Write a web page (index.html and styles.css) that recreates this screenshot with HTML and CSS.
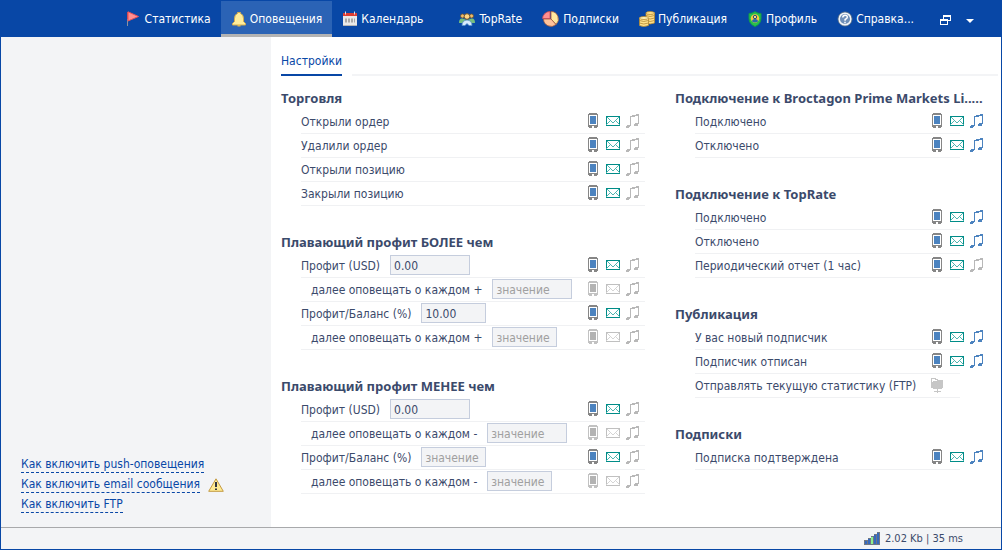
FILE: index.html
```
<!DOCTYPE html>
<html lang="ru">
<head>
<meta charset="utf-8">
<meta name="viewport" content="width=device-width, initial-scale=1">
<title>Оповещения</title>
<link rel="stylesheet" href="styles.css">
</head>
<body>
<svg class="sprite" aria-hidden="true">
  <symbol id="phone" viewBox="0 0 20 17">
    <path class="case" fill-rule="evenodd" d="M6 0h8v1h1v13h-1v1h-3v-2H9v2H6v-1H5V1h1zM6 2v10h8V2z"/>
    <path class="screen" d="M7 3h6v8H7z"/>
  </symbol>
  <symbol id="mail" viewBox="0 0 20 17">
    <path class="edge" d="M3.500 3.500h13v9h-13z"/>
    <path class="fold" d="M4 4h1v1h1v1h1v1h1v1h1v1h2V8h1V7h1V6h1V5h1V4h1v1h-1v1h-1v1h-1v1h1v1h1v1h1v1h1v1h-1v-1h-1v-1h-1V9h-1V8h-1v1h-1v1H9V9H8V8H7v1H6v1H5v1H4v1H3v-1h1v-1h1V9h1V8h1V7H6V6H5V5H4z"/>
  </symbol>
  <symbol id="note" viewBox="0 0 20 17">
    <path class="ink" d="M7 3h2V2h4V1h3v10h-1v2h-4v-2h1v-1h3V3h-3v1H8v9H7v1H6v1H3v-2h1v-1h3z"/>
  </symbol>
  <symbol id="server" viewBox="0 0 20 17">
    <path fill="none" stroke="#c6c6c6" d="M4.500 11V1.500h4v1h2v1h5"/>
    <path fill="#c6c6c6" d="M6 4h10v7h-1v1H6v-1H5V5h1zM10 12h1v2h3v1h-3v1h-1v-1H7v-1h3z"/>
  </symbol>
</svg>

<header class="topbar">
  <nav class="nav">
    <a class="nav-item" href="#"><svg class="nav-icon" viewBox="0 0 16 16"><path d="M1.500 1v14" stroke="#b34a55"/><path d="M1.500 8v7" stroke="#8d8f9c"/><path d="M2 .8 12.500 5.500 2 10z" fill="#ff8f91" stroke="#e84f57"/></svg>Статистика</a>
    <a class="nav-item active" href="#" aria-current="page"><svg class="nav-icon" viewBox="0 0 16 16"><path d="M6.500 1.500h3v1q3 1 3 5v3l2 2v1.500h-13V12.500l2-2v-3q0-4 3-5z" fill="#ffed9b" stroke="#d6ad4b"/><path d="M6.500 14h3v1.500h-3z" fill="#e4b94a"/></svg>Оповещения</a>
    <a class="nav-item" href="#"><svg class="nav-icon" viewBox="0 0 16 16"><path d="M1 5h14v10H1z" fill="#e9e9e9"/><path d="M1 2h14v3H1z" fill="#dc3c32"/><path d="M3.500.500v3M12.500.500v3" stroke="#d9e0ec"/><path d="M3 9.500h10" stroke="#a8a8a8" stroke-width="4" stroke-dasharray="2 1"/><path d="M1 14.500h14" stroke="#b5b5b5"/></svg>Календарь</a>
    <a class="nav-item gap-before" href="#"><svg class="nav-icon wide" viewBox="0 0 18 16"><g fill="#f0bd6c" stroke="#6d542e" stroke-width=".8"><circle cx="4.500" cy="5" r="2"/><circle cx="13.500" cy="5" r="2"/></g><path d="M1 12q0-5 3.500-4.500L9 9l4.500-1.500Q17 7 17 12z" fill="#75bd7e"/><path d="M4 14.500q0-5 5-5.500 5 .5 5 5.500H11l-2-2-2 2z" fill="#d9ecff" stroke="#5a93ca" stroke-width=".8"/><circle cx="9" cy="5.500" r="2.800" fill="#ffd782" stroke="#785b31"/></svg>TopRate</a>
    <a class="nav-item" href="#"><svg class="nav-icon wide" viewBox="0 0 18 16"><g stroke="#a35c3c" stroke-width=".8"><path d="M9 8V.500A7.500 7.500 0 0 1 14 13.500z" fill="#ffeaa0"/><path d="m9 8 5 5.500A7.500 7.500 0 0 1 1.500 8z" fill="#ffc39b"/><path d="M8 7.500H.500A7.500 7.500 0 0 1 8 .500z" fill="#ff8f91" stroke="#cc4b53"/></g></svg>Подписки</a>
    <a class="nav-item" href="#"><svg class="nav-icon" viewBox="0 0 16 16"><g fill="#ffe18a" stroke="#b48932" stroke-width=".8"><path d="M7 2v10q4 2 8.500 0V2z"/><ellipse cx="11.200" cy="2" rx="4.300" ry="1.500"/><path d="M7 4.500q4 2 8.500 0M7 7q4 2 8.500 0M7 9.500q4 2 8.500 0" fill="none"/><path d="M.500 7v7.500q4 2 9 0V7z"/><ellipse cx="5" cy="7" rx="4.500" ry="1.500" fill="#fff0b3"/><path d="M.500 9.500q4 2 9 0M.500 12q4 2 9 0" fill="none"/></g></svg>Публикация</a>
    <a class="nav-item" href="#"><svg class="nav-icon" viewBox="0 0 16 16"><path d="M8 .700q3 2 6 1.800v5Q14 13 8 15.500 2 13 2 7.500v-5Q5 2.700 8 .700z" fill="#27c24c" stroke="#139b4a"/><circle cx="8" cy="7.500" r="4.200" fill="#f7c843"/><circle cx="8" cy="6" r="1.700" fill="#fbdc78" stroke="#204f80"/><path d="M5 10.500q0-2.500 3-2.500t3 2.500q-3 2-6 0z" fill="#2669b0"/></svg>Профиль</a>
    <a class="nav-item" href="#"><svg class="nav-icon" viewBox="0 0 16 16"><circle cx="8" cy="8" r="7" fill="#7f98b6" stroke="#5b7188"/><circle cx="8" cy="8" r="5.800" fill="#6f8fb8" stroke="#f2f5f8" stroke-width="1.500"/><path d="M5.800 6.500q0-2.300 2.300-2.300t2.200 2q0 1.200-2.200 2.300v1.200M8 10.800v1.500" fill="none" stroke="#fff" stroke-width="1.500"/></svg>Справка...</a>
  </nav>
  <button class="bar-button" aria-label="Восстановить окно"><svg width="12" height="12" viewBox="0 0 12 12" shape-rendering="crispEdges"><path fill="#fff" fill-rule="evenodd" d="M3 1h8v6H8v4H0V5h3zM4 3v2h4v1h2V3zM1 7v3h6V7z"/></svg></button>
  <button class="bar-button" aria-label="Меню"><svg width="8" height="12" viewBox="0 0 8 12"><path fill="#fff" d="M0 5h8L4 9z"/></svg></button>
</header>

<div class="content">
  <aside class="sidebar">
    <ul class="help">
      <li><a href="#">Как включить push-оповещения</a></li>
      <li><a href="#">Как включить email сообщения</a><svg class="warning" viewBox="0 0 16 14" role="img" aria-label="Внимание"><path d="M8 .800 15.300 13.300H.700z" fill="#ffeb94" stroke="#c49a42" stroke-linejoin="round"/><path d="M8 4v5M8 10.500v1.500" stroke="#2f3440" stroke-width="2"/></svg></li>
      <li><a href="#">Как включить FTP</a></li>
    </ul>
  </aside>

  <main class="main">
    <div class="tabs"><a class="tab" href="#">Настройки</a></div>
    <div class="columns">
      <div class="column">
        <section>
          <h2>Торговля</h2>
          <ul class="rows">
            <li class="row"><span>Открыли ордер</span><div class="toggles"><button class="phone on" aria-label="Push"><svg><use href="#phone"/></svg></button><button class="mail on" aria-label="Email"><svg><use href="#mail"/></svg></button><button class="note" aria-label="Звук"><svg><use href="#note"/></svg></button></div></li>
            <li class="row"><span>Удалили ордер</span><div class="toggles"><button class="phone on" aria-label="Push"><svg><use href="#phone"/></svg></button><button class="mail on" aria-label="Email"><svg><use href="#mail"/></svg></button><button class="note" aria-label="Звук"><svg><use href="#note"/></svg></button></div></li>
            <li class="row"><span>Открыли позицию</span><div class="toggles"><button class="phone on" aria-label="Push"><svg><use href="#phone"/></svg></button><button class="mail on" aria-label="Email"><svg><use href="#mail"/></svg></button><button class="note" aria-label="Звук"><svg><use href="#note"/></svg></button></div></li>
            <li class="row"><span>Закрыли позицию</span><div class="toggles"><button class="phone on" aria-label="Push"><svg><use href="#phone"/></svg></button><button class="mail on" aria-label="Email"><svg><use href="#mail"/></svg></button><button class="note" aria-label="Звук"><svg><use href="#note"/></svg></button></div></li>
          </ul>
        </section>
        <section>
          <h2>Плавающий профит БОЛЕЕ чем</h2>
          <ul class="rows">
            <li class="row"><label for="more-usd">Профит (USD)</label><input id="more-usd" value="0.00" placeholder="значение"><div class="toggles"><button class="phone on" aria-label="Push"><svg><use href="#phone"/></svg></button><button class="mail on" aria-label="Email"><svg><use href="#mail"/></svg></button><button class="note" aria-label="Звук"><svg><use href="#note"/></svg></button></div></li>
            <li class="row sub"><label for="more-usd-step">далее оповещать о каждом +</label><input id="more-usd-step" placeholder="значение"><div class="toggles"><button class="phone" aria-label="Push"><svg><use href="#phone"/></svg></button><button class="mail" aria-label="Email"><svg><use href="#mail"/></svg></button><button class="note" aria-label="Звук"><svg><use href="#note"/></svg></button></div></li>
            <li class="row"><label for="more-pct">Профит/Баланс (%)</label><input class="short" id="more-pct" value="10.00" placeholder="значение"><div class="toggles"><button class="phone on" aria-label="Push"><svg><use href="#phone"/></svg></button><button class="mail on" aria-label="Email"><svg><use href="#mail"/></svg></button><button class="note" aria-label="Звук"><svg><use href="#note"/></svg></button></div></li>
            <li class="row sub"><label for="more-pct-step">далее оповещать о каждом +</label><input class="short" id="more-pct-step" placeholder="значение"><div class="toggles"><button class="phone" aria-label="Push"><svg><use href="#phone"/></svg></button><button class="mail" aria-label="Email"><svg><use href="#mail"/></svg></button><button class="note" aria-label="Звук"><svg><use href="#note"/></svg></button></div></li>
          </ul>
        </section>
        <section>
          <h2>Плавающий профит МЕНЕЕ чем</h2>
          <ul class="rows">
            <li class="row"><label for="less-usd">Профит (USD)</label><input id="less-usd" value="0.00" placeholder="значение"><div class="toggles"><button class="phone on" aria-label="Push"><svg><use href="#phone"/></svg></button><button class="mail on" aria-label="Email"><svg><use href="#mail"/></svg></button><button class="note" aria-label="Звук"><svg><use href="#note"/></svg></button></div></li>
            <li class="row sub"><label for="less-usd-step">далее оповещать о каждом -</label><input id="less-usd-step" placeholder="значение"><div class="toggles"><button class="phone" aria-label="Push"><svg><use href="#phone"/></svg></button><button class="mail" aria-label="Email"><svg><use href="#mail"/></svg></button><button class="note" aria-label="Звук"><svg><use href="#note"/></svg></button></div></li>
            <li class="row"><label for="less-pct">Профит/Баланс (%)</label><input class="short" id="less-pct" placeholder="значение"><div class="toggles"><button class="phone on" aria-label="Push"><svg><use href="#phone"/></svg></button><button class="mail on" aria-label="Email"><svg><use href="#mail"/></svg></button><button class="note" aria-label="Звук"><svg><use href="#note"/></svg></button></div></li>
            <li class="row sub"><label for="less-pct-step">далее оповещать о каждом -</label><input class="short" id="less-pct-step" placeholder="значение"><div class="toggles"><button class="phone" aria-label="Push"><svg><use href="#phone"/></svg></button><button class="mail" aria-label="Email"><svg><use href="#mail"/></svg></button><button class="note" aria-label="Звук"><svg><use href="#note"/></svg></button></div></li>
          </ul>
        </section>
      </div>

      <div class="column overhang">
        <section>
          <h2>Подключение к Broctagon Prime Markets Li.....</h2>
          <ul class="rows">
            <li class="row"><span>Подключено</span><div class="toggles"><button class="phone on" aria-label="Push"><svg><use href="#phone"/></svg></button><button class="mail on" aria-label="Email"><svg><use href="#mail"/></svg></button><button class="note on" aria-label="Звук"><svg><use href="#note"/></svg></button></div></li>
            <li class="row"><span>Отключено</span><div class="toggles"><button class="phone on" aria-label="Push"><svg><use href="#phone"/></svg></button><button class="mail on" aria-label="Email"><svg><use href="#mail"/></svg></button><button class="note on" aria-label="Звук"><svg><use href="#note"/></svg></button></div></li>
          </ul>
        </section>
        <section>
          <h2>Подключение к TopRate</h2>
          <ul class="rows">
            <li class="row"><span>Подключено</span><div class="toggles"><button class="phone on" aria-label="Push"><svg><use href="#phone"/></svg></button><button class="mail on" aria-label="Email"><svg><use href="#mail"/></svg></button><button class="note on" aria-label="Звук"><svg><use href="#note"/></svg></button></div></li>
            <li class="row"><span>Отключено</span><div class="toggles"><button class="phone on" aria-label="Push"><svg><use href="#phone"/></svg></button><button class="mail on" aria-label="Email"><svg><use href="#mail"/></svg></button><button class="note on" aria-label="Звук"><svg><use href="#note"/></svg></button></div></li>
            <li class="row"><span>Периодический отчет (1 час)</span><div class="toggles"><button class="phone on" aria-label="Push"><svg><use href="#phone"/></svg></button><button class="mail on" aria-label="Email"><svg><use href="#mail"/></svg></button><button class="note" aria-label="Звук"><svg><use href="#note"/></svg></button></div></li>
          </ul>
        </section>
        <section>
          <h2>Публикация</h2>
          <ul class="rows">
            <li class="row"><span>У вас новый подписчик</span><div class="toggles"><button class="phone on" aria-label="Push"><svg><use href="#phone"/></svg></button><button class="mail on" aria-label="Email"><svg><use href="#mail"/></svg></button><button class="note on" aria-label="Звук"><svg><use href="#note"/></svg></button></div></li>
            <li class="row"><span>Подписчик отписан</span><div class="toggles"><button class="phone on" aria-label="Push"><svg><use href="#phone"/></svg></button><button class="mail on" aria-label="Email"><svg><use href="#mail"/></svg></button><button class="note on" aria-label="Звук"><svg><use href="#note"/></svg></button></div></li>
            <li class="row"><span>Отправлять текущую статистику (FTP)</span><div class="toggles"><button aria-label="FTP"><svg><use href="#server"/></svg></button></div></li>
          </ul>
        </section>
        <section>
          <h2>Подписки</h2>
          <ul class="rows">
            <li class="row"><span>Подписка подтверждена</span><div class="toggles"><button class="phone on" aria-label="Push"><svg><use href="#phone"/></svg></button><button class="mail on" aria-label="Email"><svg><use href="#mail"/></svg></button><button class="note on" aria-label="Звук"><svg><use href="#note"/></svg></button></div></li>
          </ul>
        </section>
      </div>
    </div>
  </main>
</div>

<footer class="statusbar">
  <svg class="signal" width="16" height="13" viewBox="0 0 16 13" shape-rendering="crispEdges"><path fill="#707782" d="M0 8h4V6h3V4h3V2h3V0h3v13H0z"/><path fill="#3569bd" d="M1 9h2v3H1zM4 7h2v5H4zM10 3h2v9h-2zM13 1h2v11h-2z"/><path fill="#8df08a" d="M7 5h2v7H7z"/></svg>
  <span>2.02 Kb | 35 ms</span>
</footer>
</body>
</html>
```
FILE: styles.css
```
* { box-sizing: border-box; }

body {
  display: flex;
  flex-direction: column;
  min-height: 100vh;
  margin: 0;
  border: 1px solid #0847a6;
  border-top: 0;
  background: #fff;
  color: #3b4a6b;
  font: 12px/20px "DejaVu Sans Condensed", Tahoma, sans-serif;
}

ul { margin: 0; padding: 0; list-style: none; }
button { padding: 0; border: 0; background: none; cursor: pointer; }
a { color: #0847a6; text-decoration: none; }
.sprite { position: absolute; width: 0; height: 0; }

.topbar {
  display: flex;
  justify-content: flex-end;
  height: 37px;
  padding-right: 19px;
  background: #0847a6;
}
.nav { display: flex; }
.nav-item {
  display: flex;
  align-items: center;
  gap: 3px;
  padding: 2px 10px 0;
  border-top: 1px solid #0847a6;
  border-bottom: 3px solid transparent;
  color: #fff;
  white-space: nowrap;
}
.nav-item.active { background: #2b63b5; border-bottom-color: #b3b3b3; }
.nav-item.gap-before { margin-left: 15px; }
.nav-icon { width: 16px; height: 16px; }
.nav-icon.wide { width: 18px; }
.bar-button { display: flex; align-items: center; padding: 2px 8px 0 6px; }
.nav + .bar-button { margin-left: 10px; }

.content { display: flex; flex: 1; }
.sidebar {
  display: flex;
  flex: 0 0 270px;
  align-items: flex-end;
  padding: 0 20px 12px;
  background: #f3f4f6;
}
.help li { display: flex; align-items: center; gap: 8px; height: 20px; }
.help a { border-bottom: 1px dashed #0847a6; line-height: 15px; }
.warning { width: 16px; height: 14px; }

.main { flex: 1; min-width: 0; padding: 14px 3px 24px 10px; }
.tabs { display: flex; gap: 10px; }
.tabs::after { content: ""; flex: 1; border-bottom: 2px solid #f3f4f6; }
.tab { padding-bottom: 3px; border-bottom: 2px solid #0847a6; }

.columns {
  display: grid;
  grid-template-columns: 364fr 310fr;
  gap: 30px;
  padding: 10px 13px 0 0;
}
.column { display: flex; flex-direction: column; gap: 24px; min-width: 0; }
h2 {
  margin: 0;
  font: bold 13px/24px "Noto Sans", Tahoma, sans-serif;
  white-space: nowrap;
}
.rows { padding-left: 20px; }
.overhang .rows { margin-right: 25px; }
.row {
  display: flex;
  gap: 10px;
  height: 24px;
  border-bottom: 1px solid #f0f1f3;
  line-height: 24px;
  white-space: nowrap;
}
.row.sub { padding-left: 10px; }
.row input {
  width: 80px;
  height: 20px;
  margin: 1px 0;
  padding: 1px 3px 0;
  border: 1px solid #c5cddd;
  border-radius: 0;
  background: #f3f4f6;
  color: #3b4a6b;
  font: inherit;
}
.row input.short { width: 65px; }
.row input::placeholder { color: #a0a0a0; opacity: 1; }

.toggles { display: flex; width: 60px; margin: 3px 2px 0 auto; }
.overhang .toggles { margin-right: -27px; }
.toggles button { width: 20px; height: 17px; }
.toggles svg { display: block; width: 20px; height: 17px; shape-rendering: crispEdges; }
.phone { --case: #c2c2c2; --screen: #b3b3b3; }
.phone.on { --case: #868686; --screen: #4c83bf; }
.mail { --edge: #c0c0c0; --fold: #d5d5d5; }
.mail.on { --edge: #008c88; --fold: #4db5b0; }
.note { --ink: #b8b8b8; }
.note.on { --ink: #4c83bf; }
.case { fill: var(--case); }
.screen { fill: var(--screen); }
.edge { fill: none; stroke: var(--edge); }
.fold { fill: var(--fold); }
.ink { fill: var(--ink); }

.statusbar {
  display: flex;
  align-items: center;
  justify-content: flex-end;
  gap: 5px;
  height: 22px;
  padding-right: 38px;
  border-top: 1px solid #a8a9ab;
  background: #f3f4f6;
  font-size: 11px;
}
```
